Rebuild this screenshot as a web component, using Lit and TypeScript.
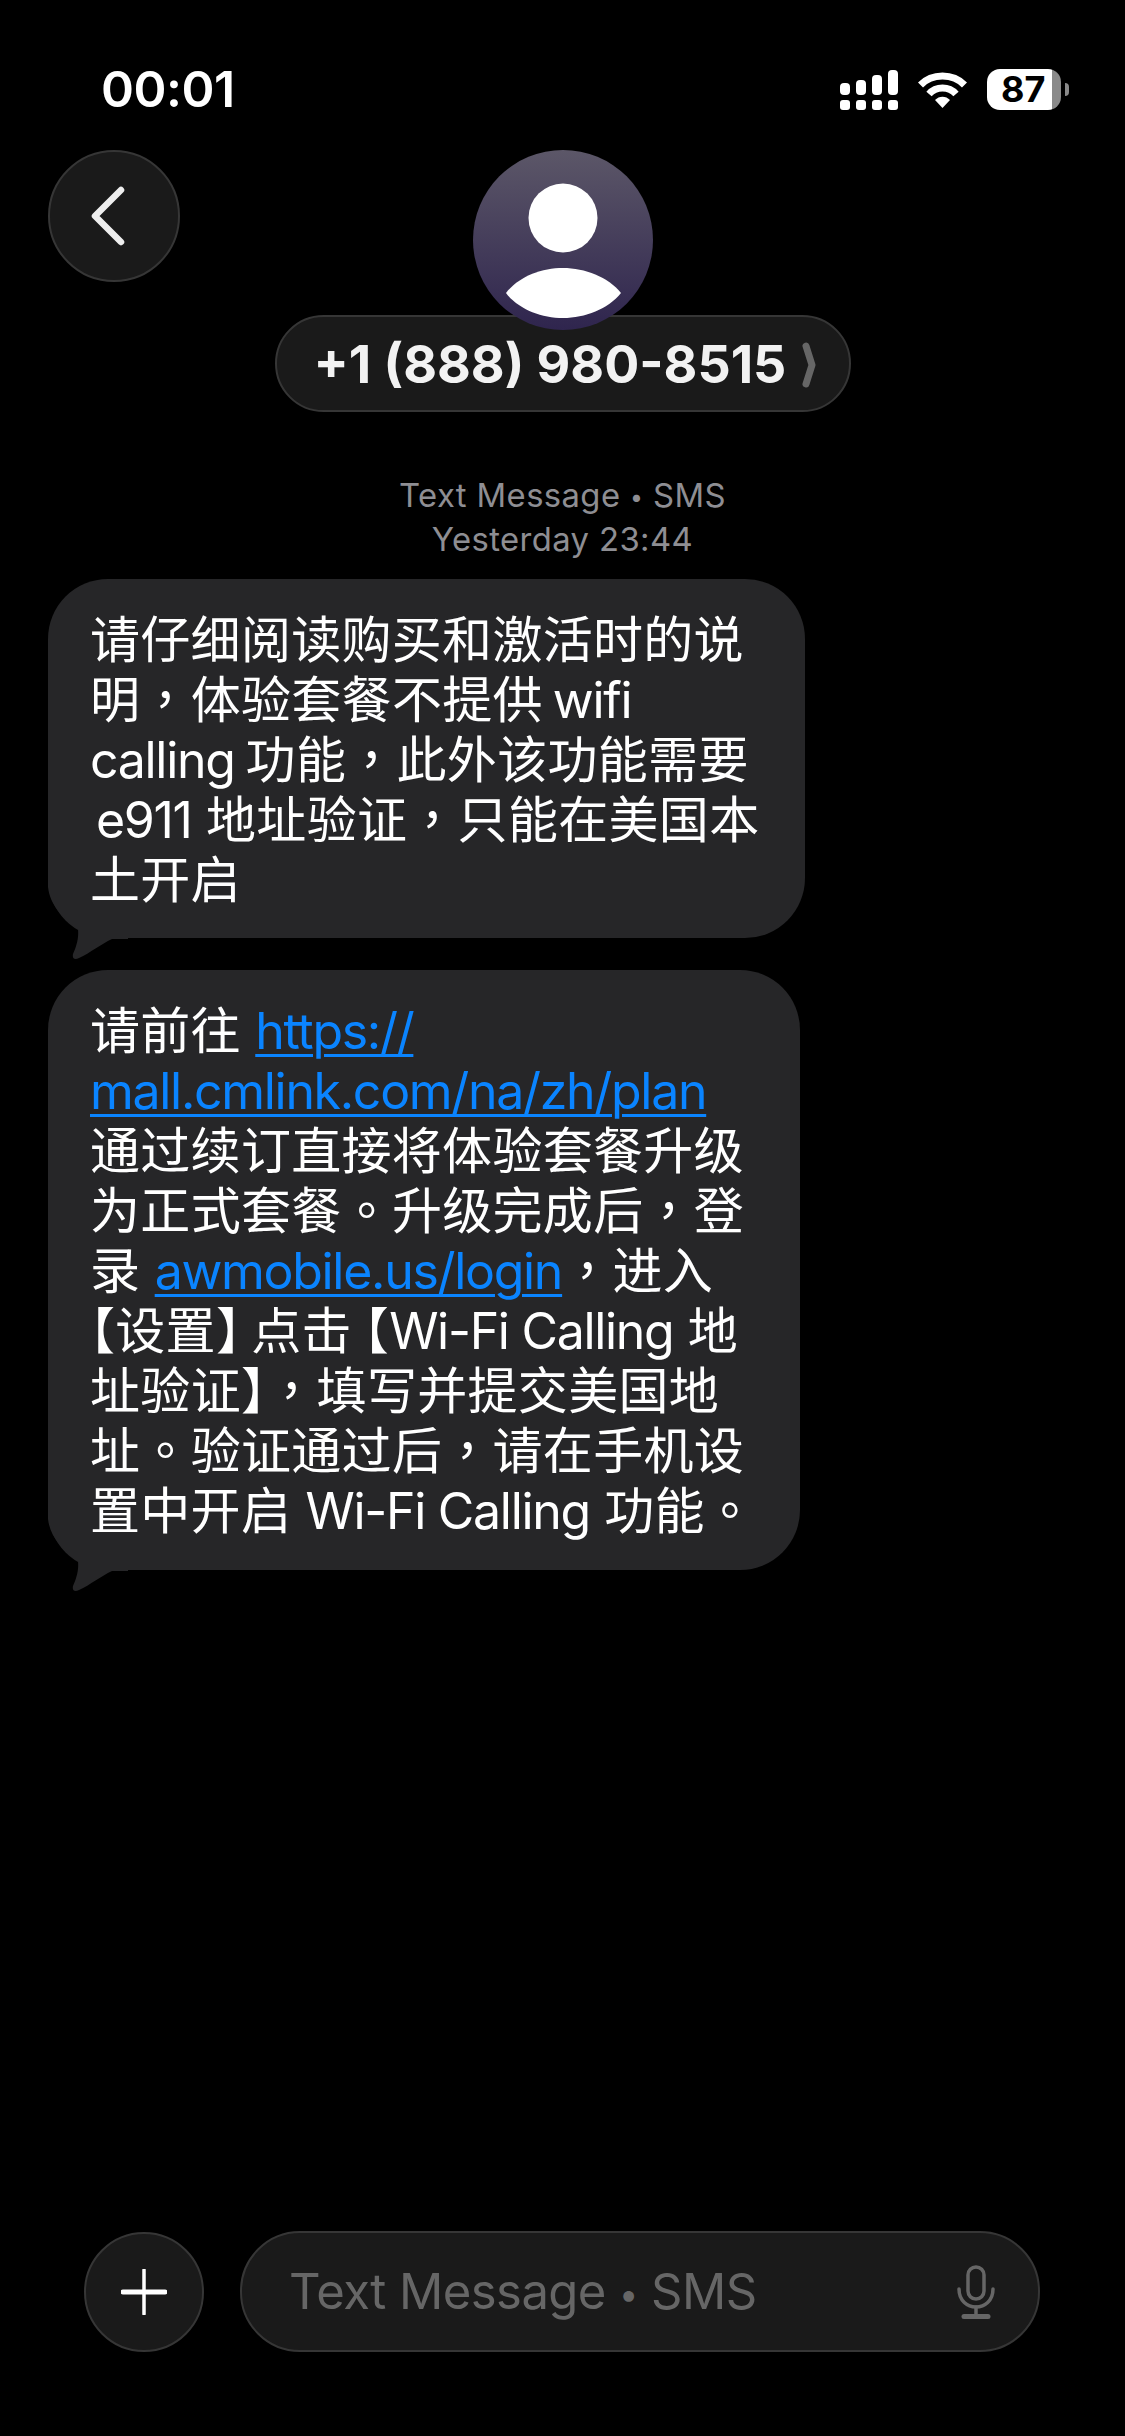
import { LitElement, html, css, svg } from "lit";
import { customElement } from "lit/decorators.js";

const tail = svg`<svg class="tail" width="80" height="90" viewBox="0 0 80 90"><path d="M0 0 L0 18 C2 36 14 48 30 60 C31 70 28 78 25 85 C24 90 27 91 31 89 C42 84 53 75 64 70 L80 70 L80 0 Z" fill="#262628"/></svg>`;

/** Wraps CJK punctuation so that it takes the centred form and half-width brackets. */
const zh = (text: string) =>
  [...text].map((c) => {
    if (c === "，" || c === "。") return html`<span class="punct">${c}</span>`;
    if (c === "【" || c === "】") return html`<span class="bracket">${c}</span>`;
    return c;
  });

@customElement("app-root")
export class AppRoot extends LitElement {
  static styles = css`
    :host { display: flex; flex-direction: column; width: 1125px; height: 2436px; background: #000; color: #fff; overflow: hidden;
      font-family: Inter, "Noto Sans CJK SC", "Liberation Sans", sans-serif; -webkit-font-smoothing: antialiased; }
    .status { display: flex; justify-content: space-between; align-items: center; height: 45px; margin-top: 67px; padding: 0 56px 0 101px; }
    .time { font-size: 50px; font-weight: 600; line-height: 45px; letter-spacing: -0.5px; }
    .status-icons { display: flex; align-items: center; }
    .batt-wrap { display: flex; align-items: center; margin-left: 20px; }
    .batt { width: 74px; height: 41px; box-sizing: border-box; border-radius: 13px; background: linear-gradient(90deg, #fff 88%, #8a8a8a 88%); color: #000; font-size: 36px; font-weight: 700; line-height: 41px; padding-left: 14px; letter-spacing: 0; }
    .nub { width: 4px; height: 13px; margin-left: 4px; background: #8a8a8a; border-radius: 0 7px 7px 0; }
    .head { display: grid; grid-template-columns: 1fr auto 1fr; margin-top: 38px; padding: 0 48px; }
    .back { width: 132px; height: 132px; box-sizing: border-box; border-radius: 50%; background: #1a1a1a; border: 2px solid #363636; display: flex; align-items: center; justify-content: center; justify-self: start; }
    .contact { display: flex; flex-direction: column; align-items: center; }
    .avatar { width: 180px; height: 180px; position: relative; z-index: 1; display: block; }
    .pill { display: flex; align-items: center; box-sizing: border-box; height: 97px; margin-top: -15px; width: 576px; padding: 2px 0 0 37px; background: #1a1a1a; border: 2px solid #363636; border-radius: 49px; font-size: 52px; font-weight: 700; color: #f2f2f2; white-space: nowrap; }
    .pill svg { margin-left: 16px; }
    .stamp { margin-top: 62px; text-align: center; color: #8e8e93; font-size: 32.8px; font-weight: 400; line-height: 42px; letter-spacing: 0.4px; }
    .dot { font-size: 0.7em; vertical-align: 0.08em; }
    .thread { display: flex; flex-direction: column; align-items: flex-start; margin-top: 19px; padding-left: 48px; gap: 32px; }
    .bubble { position: relative; box-sizing: border-box; background: #262628; border-radius: 60px; padding: 31px 0 28px 42px; font-size: 50px; line-height: 60px; font-weight: 400; letter-spacing: 0.3px; }
    .bubble.one { width: 757px; }
    .bubble.two { width: 752px; padding: 31px 0 29px 42px; }
    .line { display: block; position: relative; white-space: nowrap; height: 60px; }
    .indent { padding-left: 6px; }
    .lat { font-family: Inter, "Liberation Sans", sans-serif; letter-spacing: -1.3px; font-weight: 400; }
    .gap-l { margin-left: 10px; }
    .gap-r { margin-right: 11px; }
    .punct { font-family: "Noto Sans CJK TC", sans-serif; line-height: 0; }
    .bracket { font-family: "Noto Sans CJK SC", sans-serif; font-feature-settings: "halt"; line-height: 0; }
    .after { margin-right: 10px; }
    .before { margin-left: 12px; }
    a { color: #0a84ff; text-decoration: underline; text-decoration-thickness: 3px; text-underline-offset: 5px; }
    .tail { position: absolute; left: 0; bottom: -21px; }
    .composer { display: flex; align-items: center; margin-top: auto; margin-bottom: 84px; padding-left: 84px; }
    .plus { width: 120px; height: 120px; box-sizing: border-box; border-radius: 50%; background: #1a1a1a; border: 2px solid #363636; display: flex; align-items: center; justify-content: center; }
    .field { display: flex; align-items: center; justify-content: space-between; box-sizing: border-box; width: 800px; height: 121px; margin-left: 36px; padding: 0 43px 0 47px; border-radius: 60px; background: #1a1a1a; border: 2px solid #363636; color: #666; font-size: 49px; letter-spacing: -0.55px; }
  `;

  private lat(t: string) { return html`<span class="lat">${t}</span>`; }

  render() {
    return html`
      <div class="status">
        <div class="time">00:01</div>
        <div class="status-icons">
          <svg width="58" height="40" viewBox="0 0 58 40" fill="#fff">
            <rect x="0" y="13" width="10" height="12" rx="4"/><rect x="16" y="10" width="10" height="15" rx="4"/><rect x="32" y="5" width="10" height="20" rx="4"/><rect x="48" y="0" width="10" height="25" rx="4"/>
            <rect x="0" y="30" width="10" height="10" rx="3"/><rect x="16" y="30" width="10" height="10" rx="3"/><rect x="32" y="30" width="10" height="10" rx="3"/><rect x="48" y="30" width="10" height="10" rx="3"/>
          </svg>
          <svg style="margin-left:20px" width="49" height="37" viewBox="0 0 49 37" fill="none" stroke="#fff" stroke-width="7">
            <path d="M2.5 14 C14 2 35 2 46.5 14"/><path d="M11 23 C18 15 31 15 38 23"/><path d="M17 29 L24.5 37 L32 29 C28 24.5 21 24.5 17 29Z" fill="#fff" stroke="none"/>
          </svg>
          <div class="batt-wrap"><div class="batt">87</div><div class="nub"></div></div>
        </div>
      </div>
      <div class="head">
        <div class="back">
          <svg width="44" height="64" viewBox="0 0 44 64" fill="none" stroke="#eee" stroke-width="6.5" stroke-linecap="round" stroke-linejoin="round" style="margin-right:12px"><path d="M35 6 L9 32 L35 58"/></svg>
        </div>
        <div class="contact">
          <svg class="avatar" viewBox="0 0 180 180">
            <defs>
              <linearGradient id="g" x1="0" y1="0" x2="0" y2="1"><stop offset="0" stop-color="#5c5768"/><stop offset="1" stop-color="#2f254e"/></linearGradient>
            </defs>
            <circle cx="90" cy="90" r="90" fill="url(#g)"/>
            <circle cx="90" cy="68" r="34.5" fill="#fff"/>
            <path d="M33 143 C45 127 68 118 90 118 C112 118 135 127 148 143 C135 159 112 168 90 168 C68 168 45 159 33 143Z" fill="#fff"/>
          </svg>
          <div class="pill">+1 (888) 980-8515
            <svg width="14" height="46" viewBox="0 0 14 46" fill="none" stroke="#666" stroke-width="7" stroke-linecap="round" stroke-linejoin="round"><path d="M4 4 L10 23 L4 42"/></svg>
          </div>
        </div>
        <div></div>
      </div>
      <div class="stamp">Text Message <span class="dot">•</span> SMS<br>Yesterday 23:44</div>
      <div class="thread">
        <div class="bubble one">
          ${tail}
          <span class="line">请仔细阅读购买和激活时的说</span>
          <span class="line">${zh("明，体验套餐不提供")}<span class="lat gap-l">wifi</span></span>
          <span class="line"><span class="lat gap-r">calling</span>${zh("功能，此外该功能需要")}</span>
          <span class="line indent">${this.lat("e911")} ${zh("地址验证，只能在美国本")}</span>
          <span class="line">土开启</span>
        </div>
        <div class="bubble two">
          ${tail}
          <span class="line">请前往 <a class="lat" href="#">https://</a></span>
          <span class="line"><a class="lat" href="#">mall.cmlink.com/na/zh/plan</a></span>
          <span class="line">通过续订直接将体验套餐升级</span>
          <span class="line">${zh("为正式套餐。升级完成后，登")}</span>
          <span class="line">录 <a class="lat" href="#">awmobile.us/login</a>${zh("，进入")}</span>
          <span class="line"><span class="bracket">【</span>设置<span class="bracket after">】</span>点击<span class="bracket before">【</span>${this.lat("Wi-Fi Calling")} 地</span>
          <span class="line">${zh("址验证】，填写并提交美国地")}</span>
          <span class="line">${zh("址。验证通过后，请在手机设")}</span>
          <span class="line">置中开启 ${this.lat("Wi-Fi Calling")} ${zh("功能。")}</span>
        </div>
      </div>
      <div class="composer">
        <div class="plus">
          <svg width="46" height="46" viewBox="0 0 46 46" stroke="#fff" stroke-linecap="round"><path d="M23 1 V45" stroke-width="3.5"/><path d="M2 23 H44" stroke-width="5"/></svg>
        </div>
        <div class="field">
          <span>Text Message <span class="dot">•</span> SMS</span>
          <svg width="38" height="54" viewBox="0 0 38 54" fill="none" stroke="#666" stroke-width="3.5" stroke-linecap="round"><rect x="11" y="2" width="16" height="32" rx="8"/><path d="M2 24 C2 48 36 48 36 24"/><path d="M19 42 V51" /><path d="M7 51.5 H31" stroke-width="5" /></svg>
        </div>
      </div>
    `;
  }
}
